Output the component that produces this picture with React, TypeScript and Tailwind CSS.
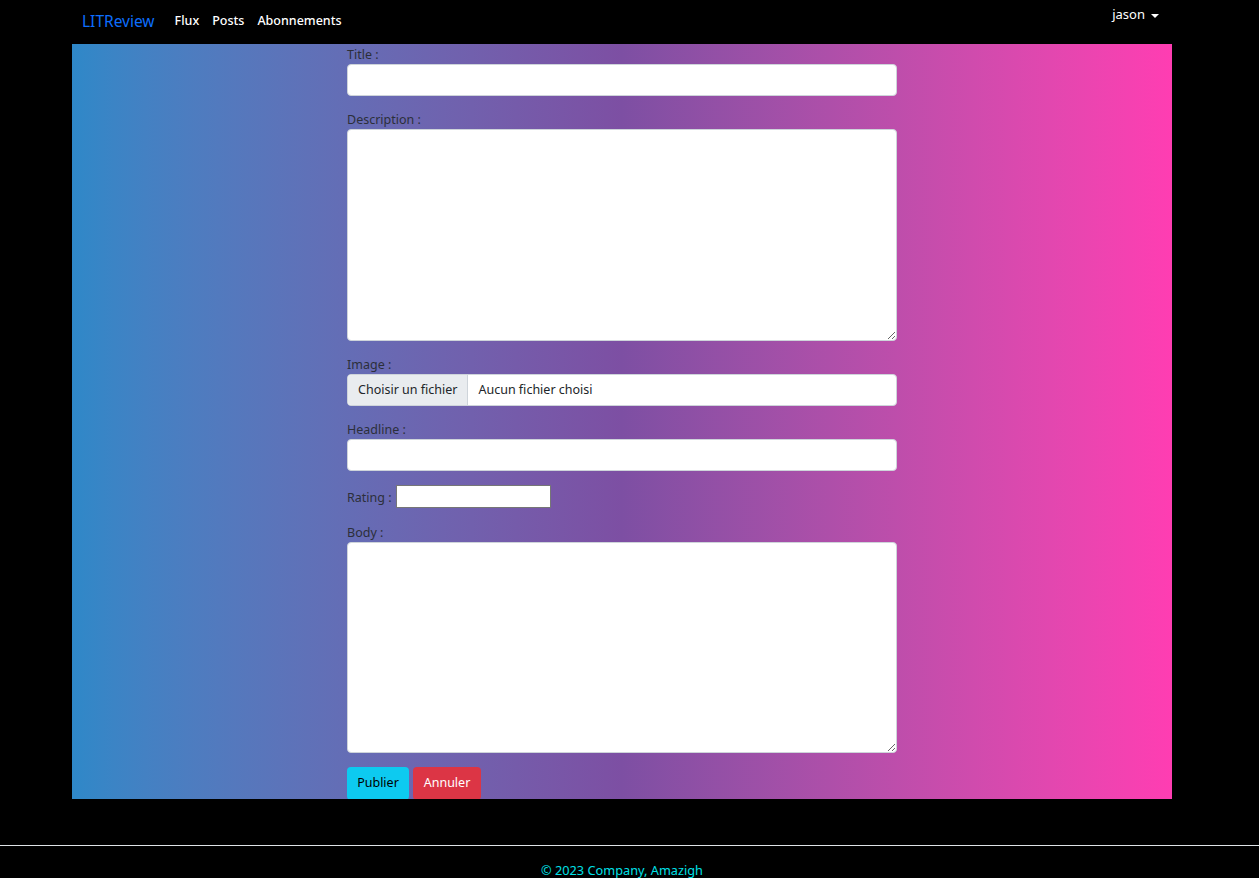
export default function App() {
  const font = { fontFamily: '"Noto Sans", "Open Sans", sans-serif' }
  return (
    <div className="min-h-screen bg-black text-[14px]" style={font}>
      {/* Navbar */}
      <nav className="h-[44px] flex items-start">
        <div className="w-[1100px] ml-[72px] flex items-start justify-between px-[10px]">
          <div className="flex items-center gap-[20px] pt-[9px]">
            <span className="text-[15.5px] text-[#0d6efd] leading-[24px]">LITReview</span>
            <div className="flex items-center gap-[13px] text-white text-[12.5px] leading-[24px] font-medium">
              <a>Flux</a>
              <a>Posts</a>
              <a>Abonnements</a>
            </div>
          </div>
          <div className="flex items-center gap-[6px] text-white text-[13px] leading-[20px] pt-[4px] pr-[3px]">
            <span>jason</span>
            <span className="w-0 h-0 border-l-[4px] border-r-[4px] border-t-[4px] border-l-transparent border-r-transparent border-t-white mt-[3px]" />
          </div>
        </div>
      </nav>

      {/* Main */}
      <main className="w-[1100px] ml-[72px] h-[755px] overflow-hidden bg-gradient-to-r from-[#2e88c8] via-[#7d4fa3] to-[#ff3db2]">
        <form className="w-[550px] mx-auto text-[#2c2f3a] text-[12.5px]">
          <div className="mb-[13px]">
            <label className="block leading-[20px] pt-[1px] h-[20px]">Title :</label>
            <input className="block w-full h-[32px] bg-white rounded-[4px] border border-[#ced4da]" />
          </div>
          <div className="mb-[13px]">
            <label className="block leading-[20px] pt-[1px] h-[20px]">Description :</label>
            <textarea className="block w-full h-[212px] bg-white rounded-[4px] border border-[#ced4da] resize-y" />
          </div>
          <div className="mb-[13px]">
            <label className="block leading-[20px] pt-[1px] h-[20px]">Image :</label>
            <div className="flex w-full h-[32px] bg-white rounded-[4px] border border-[#ced4da] overflow-hidden text-[#212529]">
              <span className="flex items-center px-[10px] bg-[#e9ecef] border-r border-[#ced4da]">Choisir un fichier</span>
              <span className="flex items-center px-[10px]">Aucun fichier choisi</span>
            </div>
          </div>
          <div className="mb-[13px]">
            <label className="block leading-[20px] pt-[1px] h-[20px]">Headline :</label>
            <input className="block w-full h-[32px] bg-white rounded-[4px] border border-[#ced4da]" />
          </div>
          <div className="mb-[13px] flex items-center h-[25px]">
            <label className="leading-[20px] mr-[4px] mt-[2px]">Rating :</label>
            <input className="w-[155px] h-[23px] bg-white border border-[#767676]" />
          </div>
          <div className="mb-[14px]">
            <label className="block leading-[20px] pt-[1px] h-[20px]">Body :</label>
            <textarea className="block w-full h-[211px] bg-white rounded-[4px] border border-[#ced4da] resize-y" />
          </div>
          <div className="flex gap-[4px]">
            <button type="button" className="h-[33px] w-[62px] rounded-[4px] bg-[#0dcaf0] text-black">Publier</button>
            <button type="button" className="h-[33px] w-[68px] rounded-[4px] bg-[#dc3545] text-white">Annuler</button>
          </div>
        </form>
      </main>

      {/* Footer */}
      <footer className="mt-[46px]">
        <hr className="border-t border-[#dee2e6]" />
        <p className="w-[1244px] text-center text-[12.75px] text-[#00e1e8] pt-[14px] leading-[20px]">© 2023 Company, Amazigh</p>
      </footer>
    </div>
  )
}
